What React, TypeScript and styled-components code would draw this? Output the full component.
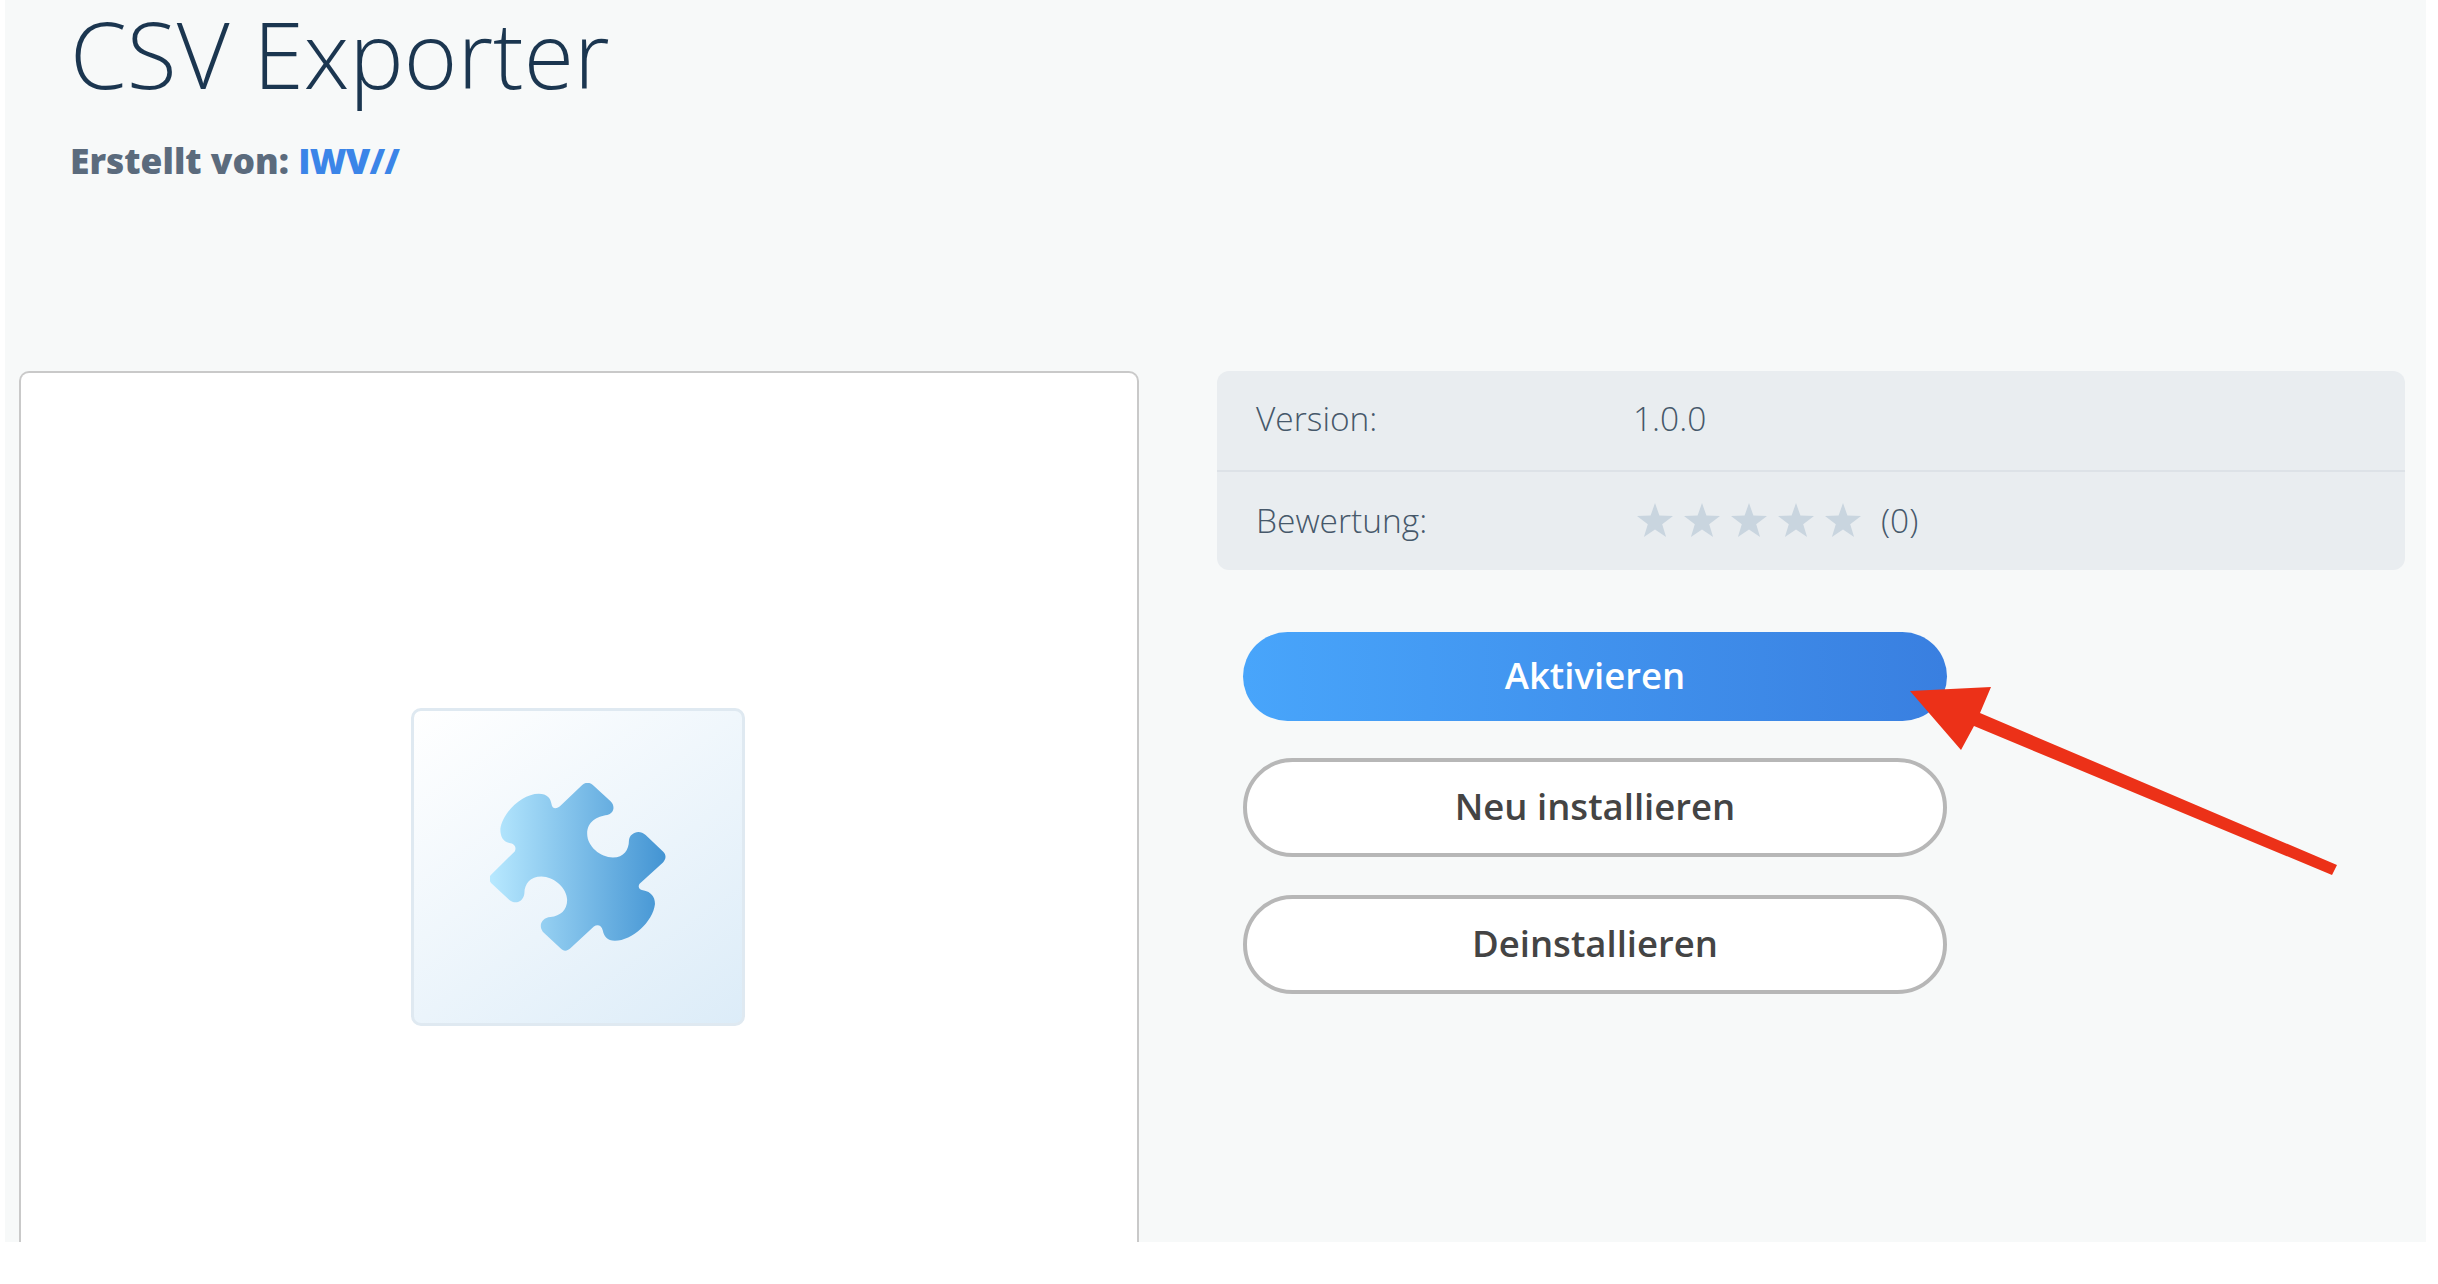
import React from 'react';
import styled, { createGlobalStyle } from 'styled-components';

const GlobalStyle = createGlobalStyle`
  html, body {
    margin: 0;
    padding: 0;
    background: #fff;
    overflow: hidden;
  }
  body {
    font-family: "Open Sans", "Liberation Sans", sans-serif;
  }
`;

const Screen = styled.div`
  position: relative;
  display: flex;
  flex-direction: column;
  box-sizing: border-box;
  width: 2421px;
  height: 1242px;
  margin-left: 5px;
  background: #f7f9f9;
  overflow: hidden;
`;

const Header = styled.header`
  height: 371px;
  flex-shrink: 0;
  padding-left: 65px;
  box-sizing: border-box;
`;

const Title = styled.h1`
  margin: 0;
  font-size: 91.5px;
  line-height: 108px;
  font-weight: 300;
  color: #1b3650;
`;

const Author = styled.div`
  margin-top: 29px;
  font-size: 35.4px;
  line-height: 46px;
  font-weight: 800;
  color: #5b6b7d;

  a {
    color: #3b85e8;
    text-decoration: none;
    letter-spacing: -0.8px;
  }
`;

const Columns = styled.main`
  flex: 1;
  display: flex;
  min-height: 0;
  padding-left: 14px;
`;

const PreviewPanel = styled.section`
  width: 1120px;
  box-sizing: border-box;
  display: flex;
  align-items: flex-start;
  justify-content: center;
  padding: 335px 2px 0 0;
  background: #fff;
  border: 2px solid #c9c9c9;
  border-bottom: 0;
  border-radius: 10px 10px 0 0;
`;

const PluginTile = styled.div`
  width: 334px;
  height: 318px;
  box-sizing: border-box;
  display: flex;
  align-items: center;
  justify-content: center;
  background: linear-gradient(145deg, #ffffff 0%, #dcecf8 100%);
  border: 3px solid #dfe9f1;
  border-radius: 10px;
`;

const Side = styled.aside`
  margin-left: 78px;
  width: 1188px;
  display: flex;
  flex-direction: column;
`;

const InfoTable = styled.div`
  height: 199px;
  background: #e9edf0;
  border-radius: 12px;
`;

const InfoRow = styled.div<{ $divided?: boolean }>`
  height: ${p => (p.$divided ? '101px' : '98px')};
  box-sizing: border-box;
  display: grid;
  grid-template-columns: 377px 1fr;
  align-items: center;
  padding-left: 39px;
  padding-bottom: ${p => (p.$divided ? '5px' : '2px')};
  font-size: 33.5px;
  font-weight: 300;
  color: #46586a;
  border-bottom: ${p => (p.$divided ? '2px solid #dde2e7' : '0')};
`;

const Rating = styled.div`
  display: flex;
  align-items: center;
`;

const Stars = styled.div`
  display: flex;
  gap: 11px;
  margin-left: 4px;
`;

const Count = styled.span`
  margin-left: 20px;
`;

const Actions = styled.div`
  margin: 62px 0 0 26px;
  width: 704px;
  display: flex;
  flex-direction: column;
`;

const ActionButton = styled.button<{ $primary?: boolean }>`
  display: block;
  box-sizing: border-box;
  width: 100%;
  height: ${p => (p.$primary ? '89px' : '99px')};
  margin-bottom: ${p => (p.$primary ? '37px' : '38px')};
  padding: 0 0 3px;
  border-radius: 50px;
  border: ${p => (p.$primary ? '0' : '4px solid #b7b7b7')};
  background: ${p => (p.$primary ? 'linear-gradient(90deg, #48a5fb 0%, #397fe0 100%)' : '#fff')};
  color: ${p => (p.$primary ? '#fff' : '#444')};
  font-family: inherit;
  font-size: 36.5px;
  font-weight: 600;
`;

const ArrowOverlay = styled.svg`
  position: absolute;
  left: 1900px;
  top: 680px;
  width: 440px;
  height: 200px;
`;

const Star = () => (
  <svg width="36" height="34" viewBox="0 0 36 34">
    <polygon fill="#c9d5df" points="18,0 22.4,12.6 36,13 25.2,21.2 29.1,34 18,26.4 6.9,34 10.8,21.2 0,13 13.6,12.6" />
  </svg>
);

const PuzzleIcon = () => (
  <svg width="176" height="168" viewBox="335 310 525 503">
    <defs>
      <linearGradient id="puzzleFill" x1="0" y1="0" x2="1" y2="0">
        <stop offset="0" stopColor="#b8e9ff" />
        <stop offset="1" stopColor="#4394d3" />
      </linearGradient>
    </defs>
    <path
      fill="url(#puzzleFill)"
      d="M610 316 C620 307 632 307 642 316 L695 365 C710 380 705 400 685 406 C655 410 625 425 625 462 C625 500 665 533 702 533 C735 533 750 510 750 482 C752 460 780 447 800 466 L852 515 C862 525 862 537 852 548 L782 612 C775 622 782 630 795 632 C815 636 828 650 828 672 C822 725 760 782 708 782 C685 782 675 768 672 752 C668 735 655 733 645 740 L578 802 C565 815 555 815 545 805 L492 755 C478 735 490 713 515 711 C545 708 565 690 565 660 C565 625 525 590 488 590 C455 590 437 612 437 640 C435 665 410 675 392 660 L338 610 C330 600 330 592 338 584 L408 515 C415 500 405 492 392 490 C372 485 365 470 365 448 C370 400 430 342 480 342 C505 342 515 355 518 372 C520 390 535 388 545 378 Z"
    />
  </svg>
);

export default function App() {
  return (
    <>
      <GlobalStyle />
      <Screen>
        <Header>
          <Title>CSV Exporter</Title>
          <Author>
            Erstellt von: <a href="#">IWV//</a>
          </Author>
        </Header>
        <Columns>
          <PreviewPanel>
            <PluginTile>
              <PuzzleIcon />
            </PluginTile>
          </PreviewPanel>
          <Side>
            <InfoTable>
              <InfoRow $divided>
                <span>Version:</span>
                <span>1.0.0</span>
              </InfoRow>
              <InfoRow>
                <span>Bewertung:</span>
                <Rating>
                  <Stars>
                    {[0, 1, 2, 3, 4].map(i => (
                      <Star key={i} />
                    ))}
                  </Stars>
                  <Count>(0)</Count>
                </Rating>
              </InfoRow>
            </InfoTable>
            <Actions>
              <ActionButton $primary>Aktivieren</ActionButton>
              <ActionButton>Neu installieren</ActionButton>
              <ActionButton>Deinstallieren</ActionButton>
            </Actions>
          </Side>
        </Columns>
        <ArrowOverlay viewBox="1900 680 440 200">
          <polygon
            fill="#ec3118"
            points="1905,691 1986,687 1975,713 2332,865 2327,875 1969,726 1956,750"
          />
        </ArrowOverlay>
      </Screen>
    </>
  );
}
